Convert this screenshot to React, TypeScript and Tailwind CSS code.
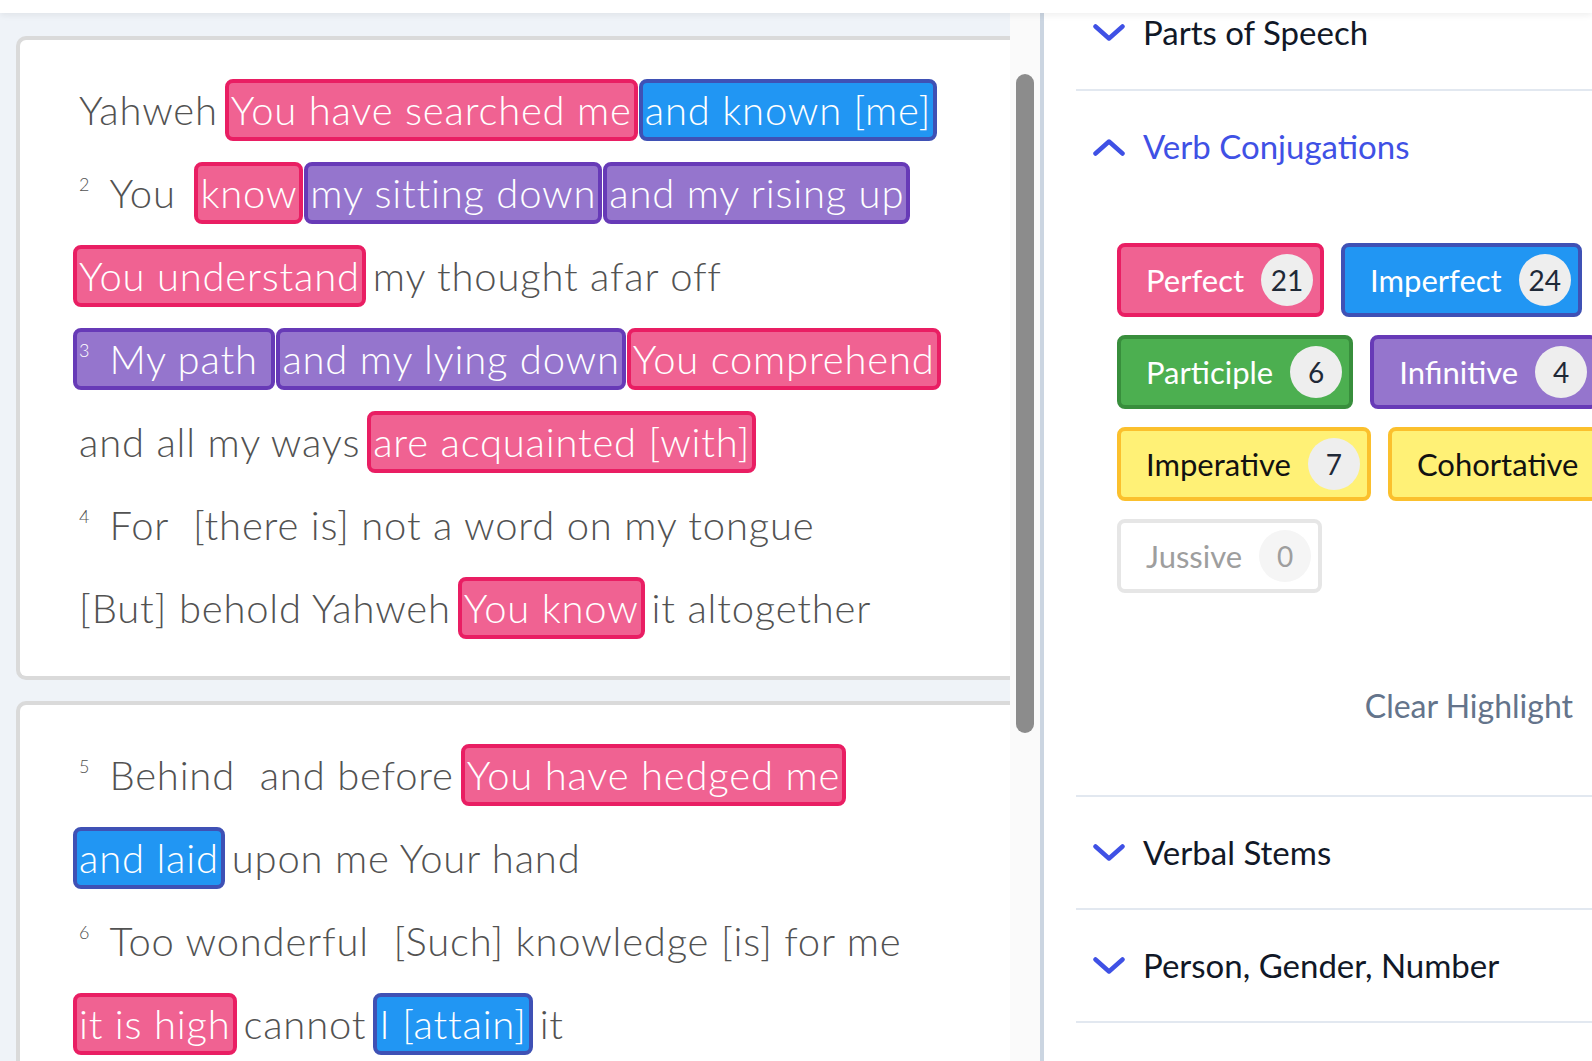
import React from "react";

type Kind = "plain" | "pink" | "blue" | "purple";

const KIND: Record<Kind, string> = {
  plain: "border-transparent text-[#525252]",
  pink: "bg-[#f06292] border-[#e91e63] text-white",
  blue: "bg-[#2196f3] border-[#3f51b5] text-white",
  purple: "bg-[#9575cd] border-[#673ab7] text-white",
};

type Seg = { k: Kind; t: string; v?: string };

const Segment = ({ s }: { s: Seg }) => (
  <span
    className={`inline-block h-[62px] whitespace-pre border-4 rounded-[8px] px-[2px] leading-[54px] ${KIND[s.k]}`}
  >
    {s.v && (
      <span className="text-[18px] tracking-normal leading-none align-[17px] mr-[20px]">{s.v}</span>
    )}
    {s.t}
  </span>
);

const Row = ({ segs }: { segs: Seg[] }) => (
  <div className="flex items-center h-[83px] gap-px">
    {segs.map((s, i) => (
      <Segment key={i} s={s} />
    ))}
  </div>
);

const card1: Seg[][] = [
  [
    { k: "plain", t: "Yahweh" },
    { k: "pink", t: "You have searched me" },
    { k: "blue", t: "and known [me]" },
  ],
  [
    { k: "plain", t: "You ", v: "2" },
    { k: "pink", t: "know" },
    { k: "purple", t: "my sitting down" },
    { k: "purple", t: "and my rising up" },
  ],
  [
    { k: "pink", t: "You understand" },
    { k: "plain", t: "my thought afar off" },
  ],
  [
    { k: "purple", t: "My path ", v: "3" },
    { k: "purple", t: "and my lying down" },
    { k: "pink", t: "You comprehend" },
  ],
  [
    { k: "plain", t: "and all my ways" },
    { k: "pink", t: "are acquainted [with]" },
  ],
  [
    { k: "plain", t: "For ", v: "4" },
    { k: "plain", t: "[there is] not a word on my tongue" },
  ],
  [
    { k: "plain", t: "[But] behold Yahweh" },
    { k: "pink", t: "You know" },
    { k: "plain", t: "it altogether" },
  ],
];

const card2: Seg[][] = [
  [
    { k: "plain", t: "Behind ", v: "5" },
    { k: "plain", t: "and before" },
    { k: "pink", t: "You have hedged me" },
  ],
  [
    { k: "blue", t: "and laid" },
    { k: "plain", t: "upon me Your hand" },
  ],
  [
    { k: "plain", t: "Too wonderful ", v: "6" },
    { k: "plain", t: "[Such] knowledge [is] for me" },
  ],
  [
    { k: "pink", t: "it is high" },
    { k: "plain", t: "cannot" },
    { k: "blue", t: "I [attain]" },
    { k: "plain", t: "it" },
  ],
];

const Card = ({ rows, className = "" }: { rows: Seg[][]; className?: string }) => (
  <div
    className={`ml-[16px] w-[1040px] bg-white border-4 border-r-0 border-[#dadada] rounded-l-[10px] pt-[28px] pb-[27px] pl-[53px] text-[40px] font-light tracking-[0.8px] ${className}`}
  >
    {rows.map((r, i) => (
      <Row key={i} segs={r} />
    ))}
  </div>
);

const Chevron = ({ up = false }: { up?: boolean }) => (
  <svg width="32" height="17" viewBox="0 0 32 17" className="shrink-0">
    <path
      d={up ? "M2.5 14.5 L16 2.5 L29.5 14.5" : "M2.5 2.5 L16 14.5 L29.5 2.5"}
      fill="none"
      stroke="#3f51e5"
      strokeWidth="4.5"
      strokeLinecap="round"
      strokeLinejoin="round"
    />
  </svg>
);

type Chip = { label: string; count?: number; cls: string; badge: string };

const chips: Chip[] = [
  { label: "Perfect", count: 21, cls: "bg-[#f06292] border-[#e91e63] text-white", badge: "bg-[#eeeeee] text-[#1f2937]" },
  { label: "Imperfect", count: 24, cls: "bg-[#2196f3] border-[#3f51b5] text-white", badge: "bg-[#eeeeee] text-[#1f2937]" },
  { label: "Participle", count: 6, cls: "bg-[#4caf50] border-[#388e3c] text-white", badge: "bg-[#eeeeee] text-[#1f2937]" },
  { label: "Infinitive", count: 4, cls: "bg-[#9575cd] border-[#673ab7] text-white", badge: "bg-[#eeeeee] text-[#1f2937]" },
  { label: "Imperative", count: 7, cls: "bg-[#fff176] border-[#fbc02d] text-[#111111]", badge: "bg-[#eeeeee] text-[#1f2937]" },
  { label: "Cohortative", count: 1, cls: "bg-[#fff176] border-[#fbc02d] text-[#111111]", badge: "bg-[#eeeeee] text-[#1f2937]" },
  { label: "Jussive", count: 0, cls: "bg-white border-[#e6e6e6] text-[#9e9e9e]", badge: "bg-[#f5f5f5] text-[#9e9e9e]" },
];

export default function App() {
  return (
    <div className="w-[1592px] h-[1061px] overflow-hidden flex flex-col font-['Lato',sans-serif] bg-white">
      <div className="h-[13px] shrink-0 bg-white relative z-10 shadow-[0_2px_7px_rgba(0,0,0,0.07)]" />
      <div className="flex flex-1 min-h-0">
        {/* Left reading pane */}
        <div className="flex w-[1040px] shrink-0 bg-[#eff3f8]">
          <div className="w-[1010px] overflow-hidden pt-[23px]">
            <Card rows={card1} />
            <Card rows={card2} className="mt-[21px]" />
          </div>
          <div className="w-[30px] bg-[#fafafa] pt-[61px] pl-[6px]">
            <div className="w-[18px] h-[659px] rounded-full bg-[#8c8c8c]" />
          </div>
        </div>
        <div className="w-[4px] shrink-0 bg-[#cbd5e1]" />
        {/* Right filter pane */}
        <div className="flex-1 min-w-0 overflow-hidden bg-white pl-[32px] text-[32px]">
          <div className="h-[78px] border-b-2 border-[#e2e8f0]">
            <div className="h-[38px] flex items-center gap-[18px] pl-[17px] text-[33px] leading-[38px] text-[#111827]">
              <Chevron />
              <span>Parts of Speech</span>
            </div>
          </div>
          <div className="border-b-2 border-[#e2e8f0] pb-[69px]">
            <div className="h-[112px] flex items-center gap-[18px] pl-[17px] text-[33px] text-[#3f51e5]">
              <Chevron up />
              <span>Verb Conjugations</span>
            </div>
            <div className="mt-[40px] pl-[41px]">
              <div className="w-[640px] flex flex-wrap gap-x-[17px] gap-y-[18px]">
                {chips.map((c) => (
                  <div
                    key={c.label}
                    className={`flex items-center border-4 rounded-[8px] pl-[25px] pr-[7px] py-[7px] ${c.cls}`}
                  >
                    <span className="leading-[40px] whitespace-nowrap text-[31px]">{c.label}</span>
                    <span
                      className={`ml-[17px] w-[52px] h-[52px] rounded-full flex items-center justify-center text-[28px] ${c.badge}`}
                    >
                      {c.count}
                    </span>
                  </div>
                ))}
              </div>
            </div>
            <div className="mt-[93px] flex justify-end pr-[19px] leading-[40px] text-[#64748b]">
              Clear Highlight
            </div>
          </div>
          <div className="h-[113px] border-b-2 border-[#e2e8f0] flex items-center gap-[18px] pl-[17px] text-[33px] text-[#111827]">
            <Chevron />
            <span>Verbal Stems</span>
          </div>
          <div className="h-[113px] border-b-2 border-[#e2e8f0] flex items-center gap-[18px] pl-[17px] text-[33px] text-[#111827]">
            <Chevron />
            <span>Person, Gender, Number</span>
          </div>
        </div>
      </div>
    </div>
  );
}
